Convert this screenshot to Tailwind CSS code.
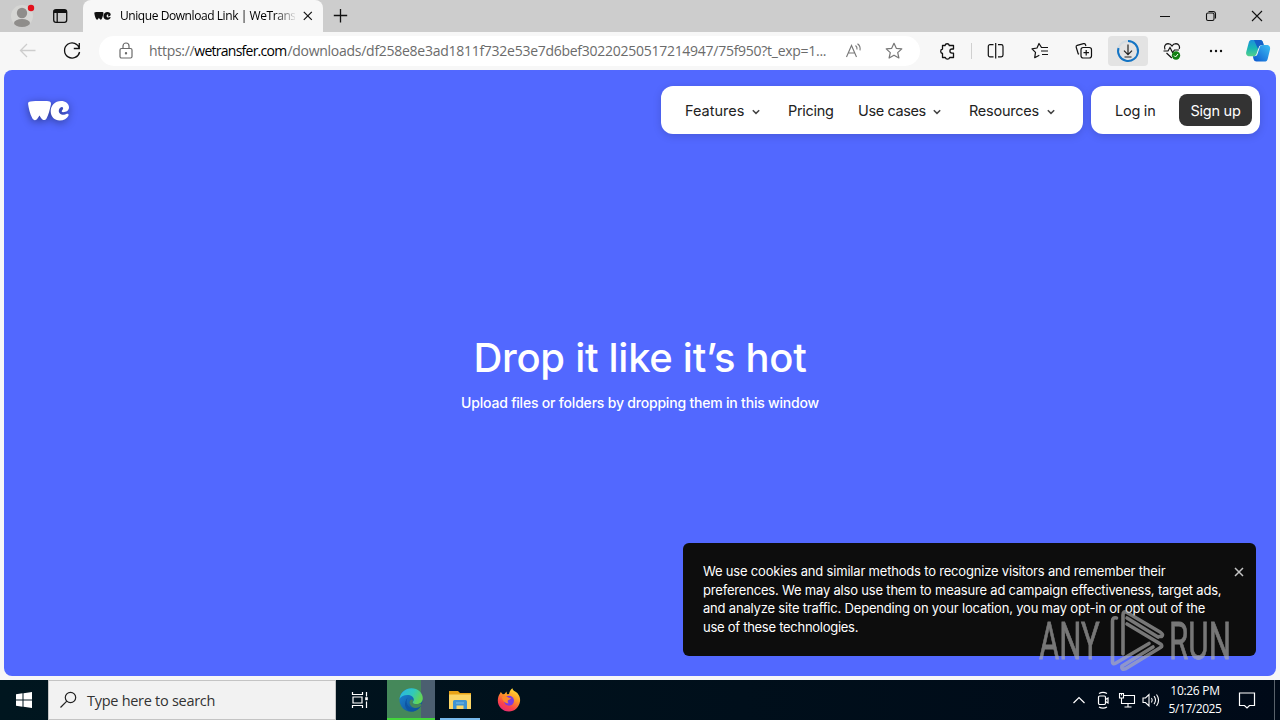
<!DOCTYPE html>
<html lang="en">
<head>
<meta charset="utf-8">
<title>Unique Download Link | WeTransfer</title>
<script src="https://cdn.jsdelivr.net/npm/@tailwindcss/browser@4"></script>
</head>
<body class="w-[1280px] h-[720px] overflow-hidden flex flex-col bg-[#f7f7f7] font-['Open_Sans','Noto_Sans',sans-serif] text-black relative">

<!-- Tab strip -->
<header class="h-8 shrink-0 flex bg-[#cdcdcd]">
  <div class="w-[83px] flex items-center bg-[#cbcbcb] rounded-br-md">
    <svg class="w-[44px] h-8" viewBox="0 0 44 32" fill="none">
      <circle cx="22" cy="16" r="11" fill="#d6d6d4"/>
      <circle cx="22" cy="13" r="5.2" fill="#8f8d8b"/>
      <ellipse cx="22" cy="23" rx="8" ry="4" fill="#8f8d8b"/>
      <circle cx="31" cy="8" r="3.2" fill="#e3101c"/>
    </svg>
    <svg class="w-8 h-8" viewBox="0 0 32 32" fill="none" stroke="#111" stroke-width="1.3">
      <rect x="9.7" y="9.7" width="13" height="12.6" rx="2.3"/>
      <path d="M9.7 12h13M9.7 10.8h13" stroke-width="1.8"/><path d="M13.2 12v10"/>
    </svg>
  </div>
  <div class="w-[240px] flex items-center bg-[#f7f7f7] rounded-t-lg">
    <svg class="w-[17px] h-2 ml-[11px]" viewBox="0 0 41 20" fill="#111"><path d="M2.5.6C7 0 16 0 20.500.3C22.800.4 23.300 2 22.800 4C21.800 8.500 20.500 14 18.500 17.500C17 20 14.500 19.300 13 17L11.500 14.500L9.500 17.500C7.800 20 5.500 19.500 4.200 17C2 13 .6 7 .1 3C-.1 1.500.9.800 2.500.6z"/><path d="M33 0C37.500 0 41 2.600 41 6.200C41 9.400 38.300 11 35 11.200C34 11.200 33.500 10.700 33.800 10C34.300 9 35.300 8.300 35.100 7C34.900 5.800 33.200 5.800 32 7C30 9 30.500 12.500 33.500 13.500C35.500 14.100 37.500 13.300 39.200 12.700C40.500 12.400 41 13.600 40.300 15C39 17.700 35.800 19.500 31.700 19.500C26.500 19.500 22.700 15.500 22.700 10.200C22.700 4.500 27 0 33 0z"/></svg>
    <div class="ml-[9px] w-[175px] whitespace-nowrap text-[12px] leading-4 bg-linear-to-r from-black from-88% to-black/10 bg-clip-text text-transparent tracking-[-0.430px]">Unique Download Link | WeTrans</div>
    <svg class="w-3 h-3 ml-[7px]" viewBox="0 0 12 12" stroke="#111" stroke-width="1.2"><path d="M1.800 1.800l8 8M9.800 1.800l-8 8"/></svg>
  </div>
  <div class="flex-1 flex items-center bg-[#cdcdcd] rounded-bl-md">
    <svg class="w-8 h-8 ml-[1px]" viewBox="0 0 32 32" stroke="#111" stroke-width="1.300"><path d="M16.500 9v13.500M9.800 15.500h13.400"/></svg>
    <div class="flex-1"></div>
    <svg class="w-[46px] h-8" viewBox="0 0 46 32" stroke="#111" stroke-width="1"><path d="M18 16.500h10"/></svg>
    <svg class="w-[46px] h-8" viewBox="0 0 46 32" fill="none" stroke="#111" stroke-width="1.100"><rect x="18.500" y="13" width="7.500" height="7.500" rx="1.500"/><path d="M20.500 11.500h4.700a2.300 2.300 0 0 1 2.300 2.300v4.700"/></svg>
    <svg class="w-[46px] h-8" viewBox="0 0 46 32" stroke="#111" stroke-width="1.100"><path d="M18 11l10 10M28 11l-10 10"/></svg>
  </div>
</header>

<!-- Toolbar -->
<div class="h-[38px] shrink-0 flex items-center pl-[6px] bg-[#f7f7f7]">
  <svg class="w-11 h-8" viewBox="0 0 44 32" fill="none" stroke="#cdcdcd" stroke-width="1.300"><path d="M29.500 15.500H14.500M21 9l-6.500 6.500L21 22"/></svg>
  <svg class="w-11 h-8" viewBox="0 0 44 32" fill="none" stroke="#111" stroke-width="1.300"><path d="M29.500 13.500A7.600 7.600 0 1 0 29.600 17M29.300 8v5.500h-5.500"/></svg>
  <div class="ml-[5px] w-[821px] h-[30px] rounded-full bg-white flex items-center">
    <svg class="w-4 h-5 ml-[19px]" viewBox="0 0 16 20" fill="none" stroke="#6a6a6a" stroke-width="1.200"><rect x="2" y="7.500" width="12" height="9.500" rx="1.500"/><path d="M5 7.500V5a3 3 0 0 1 6 0v2.500"/><circle cx="8" cy="12.300" r=".6" fill="#6a6a6a"/></svg>
    <div class="ml-[15px] w-[689px] whitespace-nowrap text-[14px] leading-5 text-[#6b6b6b]"><span class="tracking-[-0.300px]">https://</span><span class="text-black tracking-[-0.750px]">wetransfer.com</span><span class="tracking-[-0.270px] ml-px">/downloads/df258e8e3ad1811f732e53e7d6bef30220250517214947/75f950?t_exp=1...</span></div>
    <svg class="w-5 h-5 ml-[6px]" viewBox="0 0 20 20" fill="none" stroke="#777" stroke-width="1.100"><path d="M2.500 16L7.500 4.500L12.500 16M4.300 12h6.400"/><path d="M11.500 4.500c1.300 1 1.800 2.200 1.500 4M13.500 2.800c2.300 1.600 3 3.800 2.500 6.500"/></svg>
    <svg class="w-5 h-5 ml-5" viewBox="0 0 20 20" fill="none" stroke="#777" stroke-width="1.200" stroke-linejoin="round"><path d="M10 2.300l2.300 5 5.500.6-4.100 3.700 1.200 5.400-4.900-2.800L5.100 17l1.200-5.400L2.200 7.900l5.500-.6z"/></svg>
  </div>
  <svg class="w-11 h-8 ml-[5px]" viewBox="0 0 44 32" fill="none" stroke="#111" stroke-width="1.300" stroke-linejoin="round"><path d="M17.500 10.500H20a2.200 2.200 0 0 1 4.300 0H28.500V14H27a2.100 2.100 0 0 0 0 4.200H28.500V22.500H24.700a2.300 2.300 0 0 1-4.400 0H17.500V18.500a2.300 2.300 0 0 1 0-4.500z"/></svg>
  <div class="w-px h-4 bg-[#d0d0d0] ml-[2px] mr-[2px]"></div>
  <svg class="w-11 h-8" viewBox="0 0 44 32" fill="none" stroke="#111" stroke-width="1.200"><path d="M19.500 9.700H16a1.700 1.700 0 0 0-1.700 1.700v8.700a1.700 1.700 0 0 0 1.700 1.700h3.500M24 9.700h3.300a1.700 1.700 0 0 1 1.700 1.700v8.700a1.700 1.700 0 0 1-1.700 1.700H24M21.700 8v15.500"/></svg>
  <svg class="w-11 h-8" viewBox="0 0 44 32" fill="none" stroke="#111" stroke-width="1.200" stroke-linejoin="round"><path d="M24.500 12.500h-1L21 8.500l-2 4.500-5 .8 3.500 3.600-.8 5.300 4.600-2.500M24 12.500h6M23 16h7M24 19.500h6"/></svg>
  <svg class="w-11 h-8" viewBox="0 0 44 32" fill="none" stroke="#111" stroke-width="1.200"><rect x="19" y="12.500" width="10.500" height="10.500" rx="2.200"/><path d="M24.200 15v5.500M21.500 17.700h5.500M17 19.300l-.8-.5-2-6.500c-.3-1 .2-1.700 1-2l6.300-1.700c1-.2 1.700.1 2 1l.4 1.400"/></svg>
  <div class="w-11 flex justify-center"><div class="w-10 h-[30px] rounded bg-[#e3e3e3] flex items-center justify-center">
    <svg class="w-6 h-6" viewBox="0 0 24 24" fill="none"><circle cx="12" cy="12" r="10" stroke="#d2dbe2" stroke-width="1.800"/><path d="M12 2A10 10 0 1 1 2.500 9" stroke="#1474c4" stroke-width="2"/><path d="M12 5.500v10M8 11.700l4 4 4-4M8.500 18h7" stroke="#222" stroke-width="1.200"/></svg>
  </div></div>
  <svg class="w-11 h-8" viewBox="0 0 44 32" fill="none" stroke="#111" stroke-width="1.200"><path d="M15 14.500c-1.300-3 .2-5.700 3-5.800 2 0 3.300 1 4 2.300.7-1.300 2-2.300 4-2.300 2.800.1 4.300 2.800 3.200 5.300M16.500 18l5.300 5M13.500 16h4.500l2-3.500 2.500 5 2-2.500h4.500"/><circle cx="26" cy="20.500" r="4.200" fill="#138014" stroke="none"/><path d="M24 20.500l1.500 1.500 2.500-3" stroke="#fff" stroke-width="1"/></svg>
  <svg class="w-11 h-8" viewBox="0 0 44 32" fill="#111"><circle cx="17" cy="16" r="1.200"/><circle cx="22" cy="16" r="1.200"/><circle cx="27" cy="16" r="1.200"/></svg>
  <svg class="w-[40px] h-8" viewBox="0 0 40 32">
    <defs>
      <linearGradient id="c1" x1="0" y1="0" x2="0" y2="1"><stop offset="0" stop-color="#1c8fdc"/><stop offset=".5" stop-color="#19b5b5"/><stop offset="1" stop-color="#54d08a"/></linearGradient>
      <linearGradient id="c2" x1="1" y1="0" x2="0" y2="1"><stop offset="0" stop-color="#3cc0f4"/><stop offset="1" stop-color="#0b55cf"/></linearGradient>
    </defs>
    <path d="M13 5h9c1.500 0 2.500.8 3 2.500l.7 2.500h-2c-1.500 0-2.500.8-3 2.300L18.500 19c-.6 1.700-1.600 2.300-3 2.300h-4c-2.500 0-4-1.800-3.200-4.500l2.400-9C11.200 6 12 5 13 5z" fill="url(#c1)"/>
    <path d="M16 5h6c1.500 0 2.500.8 3 2.500l.7 2.500h-2c-1.500 0-2.500.8-3 2.300L20 14z" fill="#1560c8"/>
    <path d="M27.500 26.500h-9c-1.500 0-2.500-.8-3-2.500l-.6-2.700h1.600c1.500 0 2.500-.6 3-2.200l2.200-6.800c.5-1.500 1.500-2.300 3-2.300h4c2.500 0 4 1.800 3.300 4.500l-2.200 9c-.4 2-1.300 3-2.300 3z" fill="url(#c2)"/>
  </svg>
</div>

<!-- Page -->
<main class="mx-1 h-[606px] shrink-0 rounded-lg bg-[#5268ff] overflow-hidden flex flex-col text-white font-['Inter',sans-serif]">
  <nav class="flex items-center pt-4 pl-6 pr-4 h-16">
    <svg class="w-[41px] h-5 mt-px overflow-visible drop-shadow-[0_2px_4px_rgba(0,0,0,0.4)]" viewBox="0 0 41 20" fill="#fff"><path d="M2.5.6C7 0 16 0 20.500.3C22.800.4 23.300 2 22.800 4C21.800 8.500 20.500 14 18.500 17.500C17 20 14.500 19.300 13 17L11.500 14.500L9.500 17.500C7.800 20 5.500 19.500 4.200 17C2 13 .6 7 .1 3C-.1 1.500.9.800 2.500.6z"/><path d="M33 0C37.500 0 41 2.600 41 6.200C41 9.400 38.300 11 35 11.200C34 11.200 33.500 10.700 33.800 10C34.300 9 35.300 8.300 35.100 7C34.900 5.800 33.200 5.800 32 7C30 9 30.500 12.500 33.500 13.500C35.500 14.100 37.500 13.300 39.200 12.700C40.500 12.400 41 13.600 40.300 15C39 17.700 35.800 19.500 31.700 19.500C26.500 19.500 22.700 15.500 22.700 10.200C22.700 4.500 27 0 33 0z"/></svg>
    <div class="flex-1"></div>
    <div class="w-[422px] h-12 rounded-xl bg-white shadow-[0_2px_8px_rgba(0,0,0,0.15)] flex items-center pl-6 pt-px text-[14.500px] text-[#222]">
      <div class="w-[103px] flex items-center"><span class="w-[67px]">Features</span><svg class="w-2 h-2 mt-0.5" viewBox="0 0 8 8" fill="none" stroke="#444" stroke-width="1.500"><path d="M.8 2.200L4 5.400L7.200 2.200"/></svg></div>
      <div class="w-[70px] tracking-[-0.300px]">Pricing</div>
      <div class="w-[111px] flex items-center"><span class="w-[75px] whitespace-nowrap tracking-[-0.400px]">Use cases</span><svg class="w-2 h-2 mt-0.5" viewBox="0 0 8 8" fill="none" stroke="#444" stroke-width="1.500"><path d="M.8 2.200L4 5.400L7.200 2.200"/></svg></div>
      <div class="flex items-center"><span class="w-[78px] tracking-[-0.250px]">Resources</span><svg class="w-2 h-2 mt-0.5" viewBox="0 0 8 8" fill="none" stroke="#444" stroke-width="1.500"><path d="M.8 2.200L4 5.400L7.200 2.200"/></svg></div>
    </div>
    <div class="ml-2 w-[169px] h-12 rounded-xl bg-white shadow-[0_2px_8px_rgba(0,0,0,0.15)] flex items-center justify-between pl-6 pr-2 text-[14.500px] text-[#222] tracking-[-0.250px]">
      <span class="whitespace-nowrap pt-px">Log in</span>
      <span class="w-[73px] h-8 rounded-lg bg-[#333] text-white flex items-center justify-center pt-px whitespace-nowrap">Sign up</span>
    </div>
  </nav>
  <section class="mt-[200px] flex flex-col items-center">
    <h1 class="text-[40px] leading-[48px] font-medium whitespace-nowrap tracking-[-0.300px]">Drop it like it’s hot</h1>
    <p class="mt-[11px] text-[14px] leading-5 font-medium whitespace-nowrap tracking-[-0.200px]">Upload files or folders by dropping them in this window</p>
  </section>
  <aside class="mt-auto mb-5 mr-5 self-end w-[573px] h-[113px] rounded-md bg-[#0d0d0d] pl-5 pr-3 pt-[19px] flex justify-between text-[13px] leading-[18.500px] whitespace-nowrap">
    <p class="tracking-[-0.190px]">We use cookies and similar methods to recognize visitors and remember their<br>preferences. We may also use them to measure ad campaign effectiveness, target ads,<br>and analyze site traffic. Depending on your location, you may opt-in or opt out of the<br><span class="tracking-[-0.270px]">use of these technologies.</span></p>
    <svg class="w-[10px] h-[10px] mt-[5px] shrink-0" viewBox="0 0 10 10" stroke="#c4c4c4" stroke-width="1.500"><path d="M1 1l8 8M9 1L1 9"/></svg>
  </aside>
</main>
<div class="h-1 shrink-0"></div>

<!-- Taskbar -->
<footer class="h-10 shrink-0 flex bg-[#00141d] bg-linear-to-r from-[#00161f] to-[#000a18] text-white">
  <div class="w-12 flex items-center justify-center"><svg class="w-4 h-4" viewBox="0 0 16 16" fill="#fff"><path d="M0 2.200L6.500 1.300V7.500H0zM7.500 1.200L16 0V7.500H7.500zM0 8.500H6.500V14.700L0 13.800zM7.500 8.500H16V16L7.500 14.800z"/></svg></div>
  <div class="w-72 bg-[#f2f2f2] border border-[#c4c4c4] flex items-center text-[#333]">
    <svg class="w-5 h-5 ml-[9px]" viewBox="0 0 20 20" fill="none" stroke="#222" stroke-width="1.200"><circle cx="12.500" cy="7.500" r="5.200"/><path d="M8.800 11.200L2.500 17.500"/></svg>
    <span class="ml-[9px] pt-px text-[14.500px] tracking-[-0.280px] whitespace-nowrap">Type here to search</span>
  </div>
  <div class="w-[51px] flex items-center justify-center"><svg class="w-[18px] h-[18px] -ml-[3px]" viewBox="0 0 18 18" fill="none" stroke="#fff" stroke-width="1.200"><path d="M1.500 1v2.500h10V1M1.500 17v-2.500h10V17M2 6h9v6H2zM15.500 1v4.500M15.500 10.500V17"/><path d="M14.200 6.200h2.600v3h-2.600z" fill="#fff" stroke="none"/></svg></div>
  <div class="w-12 bg-linear-to-r from-[#45885a] from-70% to-[#4b5f70] to-71% border-b-2 border-[#43d63b] flex items-center justify-center">
    <svg class="w-6 h-6 mt-0.5" viewBox="0 0 24 24">
      <defs><linearGradient id="e1" x1="0" y1="0" x2="1" y2=".4"><stop offset="0" stop-color="#2bb4ea"/><stop offset=".6" stop-color="#31c9b9"/><stop offset="1" stop-color="#62d556"/></linearGradient><linearGradient id="e2" x1="0" y1="0" x2="1" y2="1"><stop offset="0" stop-color="#1a87d8"/><stop offset="1" stop-color="#114a8b"/></linearGradient></defs>
      <circle cx="12" cy="12" r="11.500" fill="url(#e2)"/>
      <path d="M.5 11C1.500 4.500 6.500.3 12.500.3C19 .3 23.800 5 23.800 10.300C23.800 14 21 16.300 17.800 16.300C15.500 16.300 13.500 15.500 13.500 14.600C13.500 14 14.800 13.300 14.800 11.500C14.800 9 12 7 8.500 7C5 7 1.800 8.500.5 11z" fill="url(#e1)"/>
      <path d="M9 9.500C6 13 8 20 14.500 20.500C18 20.800 20 19.500 21.800 18C19 22 15.500 23.700 11.800 23.500C5.500 22 4 14 9 9.500z" fill="#0d55a5"/>
      <path d="M13.500 14.600C13.500 16 17 17 20.500 15.600C23 15 22.800 17 21.800 18C19 20.800 12.500 21 10.800 16C10 13.500 11.500 11.500 13 11.500C15 11.800 13.500 14 13.500 14.600z" fill="#45885a"/>
    </svg>
  </div>
  <div class="ml-[5px] w-10 border-b-2 border-[#76b9ed] flex items-center justify-center">
    <svg class="w-[22px] h-5 mt-px" viewBox="0 0 22 20"><path d="M0 1h9l2 2h11v4H0z" fill="#e8a317"/><path d="M0 4.500h22V19H0z" fill="#fbd667"/><path d="M4 19v-7.500A1.500 1.500 0 0 1 5.500 10h11a1.500 1.500 0 0 1 1.500 1.500V19h-3.500v-3.500h-7V19z" fill="#3f93d2"/><path d="M7 12.500h8v1H7z" fill="#79bce8"/></svg>
  </div>
  <div class="ml-[5px] w-12 flex items-center justify-center">
    <svg class="w-6 h-6" viewBox="0 0 24 24">
      <defs><linearGradient id="f1" x1=".8" y1="0" x2=".3" y2="1"><stop offset="0" stop-color="#ffe43a"/><stop offset=".4" stop-color="#ff9a25"/><stop offset=".75" stop-color="#fb4349"/><stop offset="1" stop-color="#e52a76"/></linearGradient></defs>
      <path d="M3 5.500L3.800 4l2 2.200L7.500 6L9.500 3.500l.5 2.800L12 6c.5-2.500 1.500-4.500 3.500-5.800 0 3 5.500 4 5.500 5.800C23 8.500 23.300 11 23 13.500C22 19.500 17.500 23.500 12 23.500C5.500 23.500.8 18.500.8 12.500C.8 10 1.500 7.500 3 5.500z" fill="url(#f1)"/>
      <circle cx="12" cy="12.700" r="5" fill="#7a3be0"/><path d="M5 9c2.500-1.800 5-1 6.500.7L14 10c-.3 1.300-2 1.700-3 2.200-.7 1 0 2.500 1 3C9 16 5 13 5 9z" fill="#ff8a2a"/>
    </svg>
  </div>
  <div class="flex-1"></div>
  <div class="flex items-center">
    <svg class="w-6 h-6" viewBox="0 0 24 24" fill="none" stroke="#fff" stroke-width="1.200"><path d="M6.500 15L12 9.500L17.500 15"/></svg>
    <svg class="w-6 h-6" viewBox="0 0 24 24" fill="none" stroke="#fff" stroke-width="1.200"><rect x="7.500" y="8" width="7" height="8.500" rx="1.200"/><path d="M14.500 11.500l2.500-1.500v5l-2.500-1.500M8 5.500q4-2.200 8 0M8 19q4 2.200 8 0"/></svg>
    <svg class="w-6 h-6" viewBox="0 0 24 24" fill="none" stroke="#fff" stroke-width="1.100"><path d="M8.500 7.500H19.500V15.500H6.500V10M13 15.500V19M9.500 19h7M4.500 5.500h4v4.500h-4zM6.500 5.500v2"/></svg>
    <svg class="w-6 h-6" viewBox="0 0 24 24" fill="none" stroke="#fff" stroke-width="1.100"><path d="M4 10v4.500h2.500L10 18V6.500L6.500 10zM12.500 10q1.500 2 0 4.500M15 8.200q3 4 0 8M17.500 6.500q4.200 5.500 0 11.500"/></svg>
    <div class="ml-[3px] w-[58px] flex flex-col items-center text-[12px] leading-[18px] whitespace-nowrap"><span class="tracking-[-0.300px]">10:26 PM</span><span class="tracking-[-0.450px]">5/17/2025</span></div>
    <svg class="w-6 h-6 ml-[11px] mr-[15px]" viewBox="0 0 24 24" fill="none" stroke="#fff" stroke-width="1.200"><path d="M4.500 5h15v12.500h-5l-2.500 2.500-2.500-2.500h-5z"/></svg>
    <div class="w-[6px] h-10 border-l border-[#59626b]"></div>
  </div>
</footer>

<!-- Watermark over page -->
<div class="absolute left-[1038px] top-[608px] opacity-65">
  <svg class="w-[194px] h-[66px] overflow-visible" viewBox="0 0 194 66" fill="none">
    <g fill="#b0b0b0" stroke="#b0b0b0" stroke-width=".8" font-family="Roboto, sans-serif" font-size="52" font-weight="400">
      <text transform="translate(1 51) scale(.62 1)" textLength="98" lengthAdjust="spacingAndGlyphs">ANY</text>
      <text transform="translate(131 51) scale(.62 1)" textLength="100" lengthAdjust="spacingAndGlyphs">RUN</text>
    </g>
    <g stroke="#b0b0b0" stroke-width="3.600" stroke-linejoin="round" stroke-linecap="round">
      <path d="M85 46V7q0-4.500 4-2.500L122 24q4 2.500 1.500 4.500L121 28.500"/>
      <path d="M78.500 10q-4-1-4 3V54q0 3 3.500 1L111 35.500"/>
      <path d="M89 16L122.500 36q2.500 2 0 3.500L88 60.500q-5 2-4-2.500L115 39M89 10L120 29"/>
    </g>
  </svg>
</div>
</body>
</html>
